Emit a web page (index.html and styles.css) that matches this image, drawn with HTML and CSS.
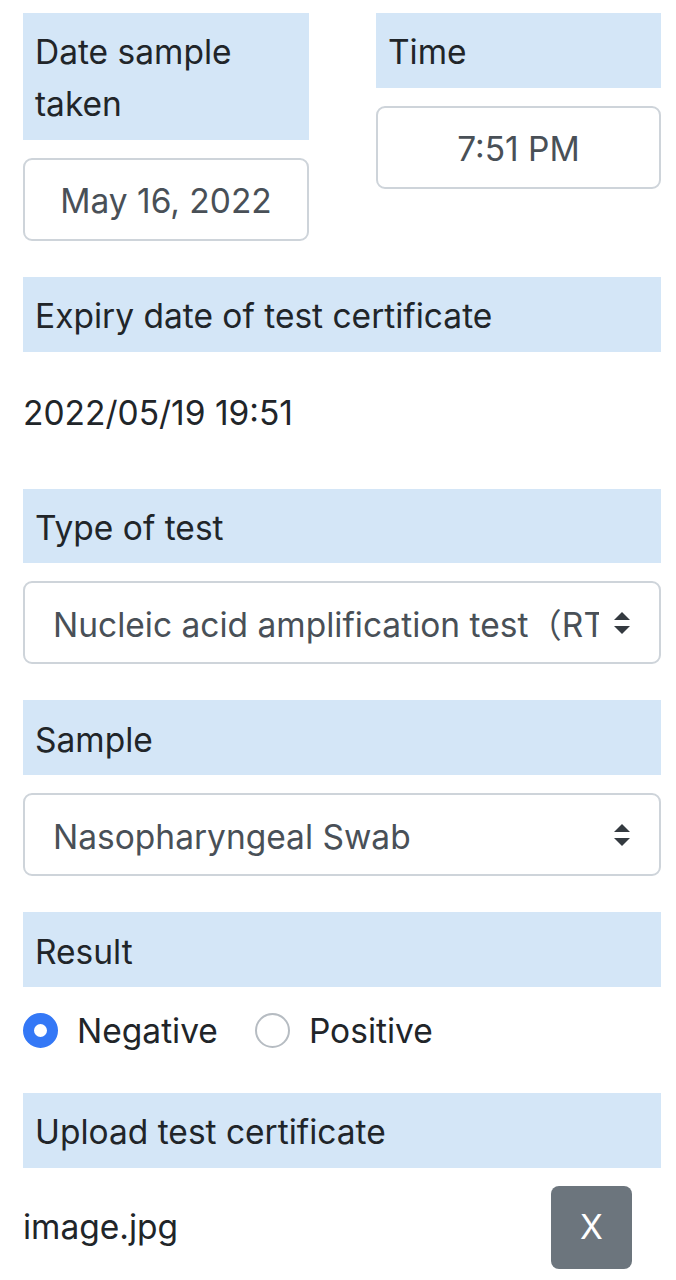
FILE: index.html
```html
<!DOCTYPE html>
<html lang="en">
<head>
  <meta charset="UTF-8">
  <meta name="viewport" content="width=device-width, initial-scale=1.0">
  <title>Test Certificate</title>
  <link rel="stylesheet" href="styles.css">
</head>
<body>
  <div class="form">
    <div class="row">
      <div class="group">
        <div class="label">Date sample taken</div>
        <div class="control center">May 16, 2022</div>
      </div>
      <div class="group">
        <div class="label">Time</div>
        <div class="control center">7:51 PM</div>
      </div>
    </div>

    <div class="group">
      <div class="label">Expiry date of test certificate</div>
      <div class="plain">2022/05/19 19:51</div>
    </div>

    <div class="group">
      <div class="label">Type of test</div>
      <div class="control select">
        <span class="select-text">Nucleic acid amplification test（RT-PCR）</span>
        <svg class="arrows" width="18" height="26" viewBox="0 0 18 26">
          <path d="M9 2 L17 10 H1 Z M9 24 L17 16 H1 Z" fill="#343a40"/>
        </svg>
      </div>
    </div>

    <div class="group">
      <div class="label">Sample</div>
      <div class="control select">
        <span class="select-text">Nasopharyngeal Swab</span>
        <svg class="arrows" width="18" height="26" viewBox="0 0 18 26">
          <path d="M9 2 L17 10 H1 Z M9 24 L17 16 H1 Z" fill="#343a40"/>
        </svg>
      </div>
    </div>

    <div class="group">
      <div class="label">Result</div>
      <div class="radios">
        <label class="radio"><span class="dot checked"></span>Negative</label>
        <label class="radio"><span class="dot"></span>Positive</label>
      </div>
    </div>

    <div class="group">
      <div class="label">Upload test certificate</div>
      <div class="upload">
        <span>image.jpg</span>
        <button class="remove-btn">X</button>
      </div>
    </div>
  </div>
</body>
</html>
```

FILE: styles.css
```css
:root {
  --label-bg: #d4e6f7;
  --text-color: #212529;
  --input-text: #495057;
  --border-color: #ced4da;
  --radio-blue: #3478f6;
  --btn-gray: #6c757d;
}

body {
  margin: 0;
  padding: 13px 15px 0 23px;
  font-family: Inter, "Noto Sans CJK SC", sans-serif;
  font-size: 33.5px;
  line-height: 52px;
  color: var(--text-color);
  background: #fff;
}

.form {
  display: flex;
  flex-direction: column;
  gap: 36px;
}

.row {
  display: grid;
  grid-template-columns: 286px 285px;
  column-gap: 67px;
  align-items: start;
}

.group {
  display: flex;
  flex-direction: column;
  gap: 18px;
}

/* text sits a little low in the original, so padding is uneven */
.label {
  background-color: var(--label-bg);
  padding: 13.4px 12px 9.4px;
}

.control {
  box-sizing: border-box;
  height: 83px;
  padding-top: 4px;
  border: 2px solid var(--border-color);
  border-radius: 9px;
  color: var(--input-text);
  display: flex;
  align-items: center;
}

.control.center {
  justify-content: center;
}

.plain {
  box-sizing: border-box;
  height: 83px;
  padding-top: 4px;
  display: flex;
  align-items: center;
}

.select {
  padding-left: 28px;
  padding-right: 28px;
  gap: 14px;
}

.select-text {
  flex: 1;
  white-space: nowrap;
  overflow: hidden;
}

.arrows {
  flex-shrink: 0;
  margin-top: -4px;
}

.radios {
  display: flex;
  align-items: center;
  gap: 37px;
}

.radio {
  display: flex;
  align-items: center;
  gap: 19px;
}

.dot {
  box-sizing: border-box;
  width: 35px;
  height: 35px;
  border-radius: 50%;
  border: 2px solid #b6bcc2;
  background: #fff;
}

.dot.checked {
  border: 11px solid var(--radio-blue);
}

.upload {
  display: flex;
  align-items: center;
  justify-content: space-between;
  padding-right: 29px;
}

.remove-btn {
  width: 81px;
  height: 83px;
  border: none;
  border-radius: 8px;
  background-color: var(--btn-gray);
  color: #fff;
  font-family: inherit;
  font-size: 33.5px;
  cursor: pointer;
}
```
